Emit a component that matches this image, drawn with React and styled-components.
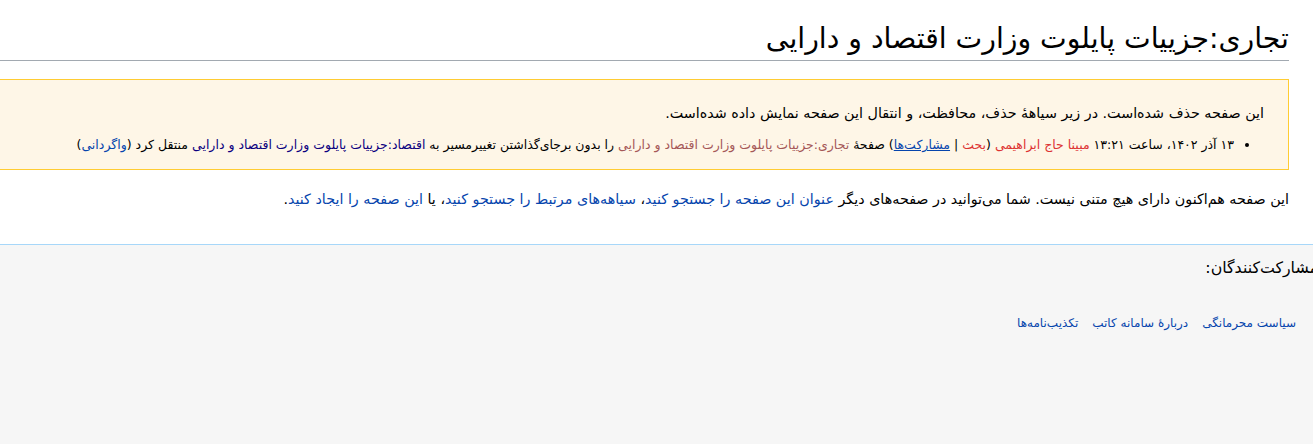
import React from 'react'
import styled, { createGlobalStyle } from 'styled-components'

const Global = createGlobalStyle`
  html, body {
    margin: 0;
    padding: 0;
    background: #f6f6f6;
    overflow: hidden;
  }
  body {
    font-family: "DejaVu Sans", sans-serif;
    color: #202122;
  }
`

const Page = styled.div`
  direction: rtl;
  min-height: 444px;
  background: #f6f6f6;
`

const Content = styled.main`
  background: #fff;
  padding: 18px 24px 37px 0;
  margin-left: -2px;
  border-bottom: 1px solid #a7d7f9;
`

const Title = styled.h1`
  margin: 0 0 18px;
  font-family: "DejaVu Sans", sans-serif;
  font-weight: normal;
  font-size: 28.3px;
  line-height: 1.5;
  color: #000;
  border-bottom: 1px solid #a2a9b1;
  padding-bottom: 0;
`

const WarningBox = styled.div`
  background: #fef6e7;
  border: 1px solid #fc3;
  padding: 22px 24px 14px 24px;
  line-height: 1.6;
`

const Para = styled.p`
  margin: ${p => p.$tight ? '0' : '0 0 10px'};
  font-size: 14.3px;
  color: #000;
`

const LogList = styled.ul`
  margin: 0;
  padding: 0 30px 0 0;
  list-style: disc;
  font-size: 12.5px;
  color: #000;
`

const Link = styled.a`
  color: ${p => p.$tone === 'new' ? '#d33' : p.$tone === 'redir' ? '#a55858' : p.$tone === 'visited' ? '#0b0080' : '#0645ad'};
  text-decoration: ${p => p.$under ? 'underline' : 'none'};
  cursor: pointer;
`

const Notice = styled(Para)`
  margin-top: 21px;
`

const Footer = styled.footer`
  padding: 13px 0 0 0;
  margin-right: -5px;
  font-size: 13px;
`

const Contributors = styled.div`
  font-size: 15.8px;
  color: #000;
  margin-bottom: 39px;
`

const FooterLinks = styled.ul`
  list-style: none;
  margin: 0;
  padding: 0 22px 0 0;
  display: flex;
  gap: 14px;
  font-size: 12px;
`

export default function App() {
  return (
    <Page>
      <Global />
      <Content>
        <Title>تجاری:جزییات پایلوت وزارت اقتصاد و دارایی</Title>
        <WarningBox>
          <Para>این صفحه حذف شده‌است. در زیر سیاههٔ حذف، محافظت، و انتقال این صفحه نمایش داده شده‌است.</Para>
          <LogList>
            <li>
              ۱۳ آذر ۱۴۰۲، ساعت ۱۳:۲۱ <Link $tone="new">مبینا حاج ابراهیمی</Link> (<Link $tone="new">بحث</Link> | <Link $under>مشارکت‌ها</Link>) صفحهٔ <Link $tone="redir">تجاری:جزییات پایلوت وزارت اقتصاد و دارایی</Link> را بدون برجای‌گذاشتن تغییرمسیر به <Link $tone="visited">اقتصاد:جزییات پایلوت وزارت اقتصاد و دارایی</Link> منتقل کرد (<Link>واگردانی</Link>)
            </li>
          </LogList>
        </WarningBox>
        <Notice $tight>
          این صفحه هم‌اکنون دارای هیچ متنی نیست. شما می‌توانید در صفحه‌های دیگر <Link>عنوان این صفحه را جستجو کنید</Link>، <Link>سیاهه‌های مرتبط را جستجو کنید</Link>، یا <Link>این صفحه را ایجاد کنید</Link>.
        </Notice>
      </Content>
      <Footer>
        <Contributors>مشارکت‌کنندگان:</Contributors>
        <FooterLinks>
          <li><Link>سیاست محرمانگی</Link></li>
          <li><Link>دربارهٔ سامانه کاتب</Link></li>
          <li><Link>تکذیب‌نامه‌ها</Link></li>
        </FooterLinks>
      </Footer>
    </Page>
  )
}
